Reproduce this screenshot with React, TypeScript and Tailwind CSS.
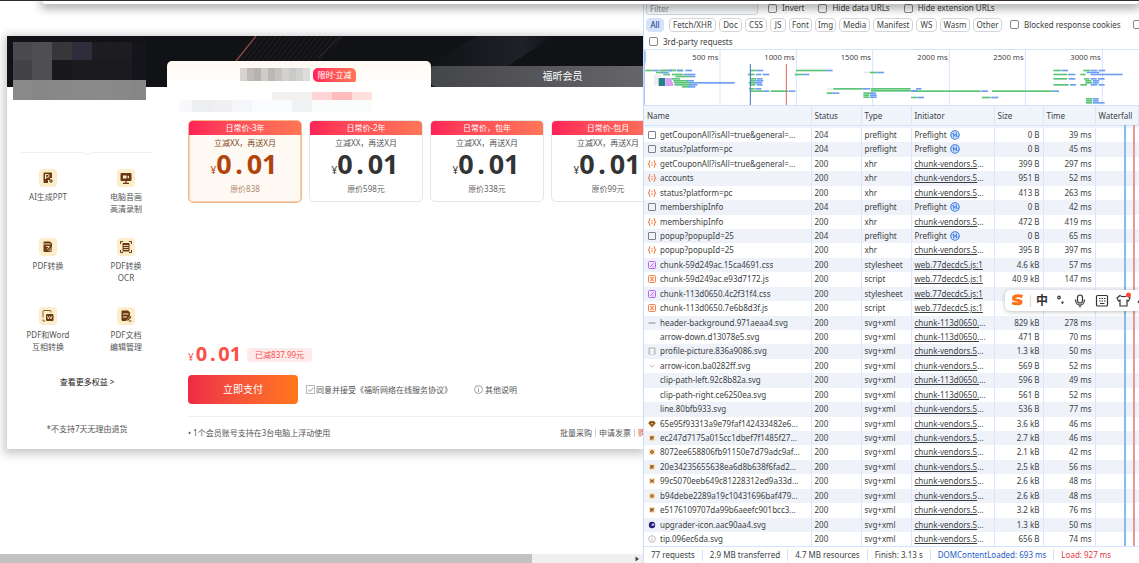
import type { ReactNode } from "react";
import clsx from "clsx";

type IconKind = "box" | "xhr" | "css" | "js" | "dash" | "none" | "picture" | "chevron" | "gem" | "tile" | "round" | "cross" | "globe" | "info";

interface RequestRow {
    icon: IconKind;
    name: string;
    status: number;
    type: string;
    initiator: "preflight" | "vendors" | "web" | "chunk";
    size: string;
    time: string;
}

const row = (
    icon: IconKind,
    name: string,
    status: number,
    type: string,
    initiator: RequestRow["initiator"],
    size: string,
    time: string
): RequestRow => ({ icon, name, status, type, initiator, size, time });

const requests: RequestRow[] = [
    row("box", "getCouponAll?isAll=true&general=...", 204, "preflight", "preflight", "0 B", "39 ms"),
    row("box", "status?platform=pc", 204, "preflight", "preflight", "0 B", "45 ms"),
    row("xhr", "getCouponAll?isAll=true&general=...", 200, "xhr", "vendors", "399 B", "297 ms"),
    row("xhr", "accounts", 200, "xhr", "vendors", "951 B", "52 ms"),
    row("xhr", "status?platform=pc", 200, "xhr", "vendors", "413 B", "263 ms"),
    row("box", "membershipInfo", 204, "preflight", "preflight", "0 B", "42 ms"),
    row("xhr", "membershipInfo", 200, "xhr", "vendors", "472 B", "419 ms"),
    row("box", "popup?popupId=25", 204, "preflight", "preflight", "0 B", "65 ms"),
    row("xhr", "popup?popupId=25", 200, "xhr", "vendors", "395 B", "397 ms"),
    row("css", "chunk-59d249ac.15ca4691.css", 200, "stylesheet", "web", "4.6 kB", "57 ms"),
    row("js", "chunk-59d249ac.e93d7172.js", 200, "script", "web", "40.9 kB", "147 ms"),
    row("css", "chunk-113d0650.4c2f31f4.css", 200, "stylesheet", "web", "10.4 kB", "112 ms"),
    row("js", "chunk-113d0650.7e6b8d3f.js", 200, "script", "web", "28.1 kB", "118 ms"),
    row("dash", "header-background.971aeaa4.svg", 200, "svg+xml", "chunk", "829 kB", "278 ms"),
    row("none", "arrow-down.d13078e5.svg", 200, "svg+xml", "chunk", "471 B", "70 ms"),
    row("picture", "profile-picture.836a9086.svg", 200, "svg+xml", "vendors", "1.3 kB", "50 ms"),
    row("chevron", "arrow-icon.ba0282ff.svg", 200, "svg+xml", "vendors", "569 B", "52 ms"),
    row("none", "clip-path-left.92c8b82a.svg", 200, "svg+xml", "chunk", "596 B", "49 ms"),
    row("none", "clip-path-right.ce6250ea.svg", 200, "svg+xml", "chunk", "561 B", "52 ms"),
    row("none", "line.80bfb933.svg", 200, "svg+xml", "vendors", "536 B", "77 ms"),
    row("gem", "65e95f93313a9e79faf142433482e6...", 200, "svg+xml", "vendors", "3.6 kB", "46 ms"),
    row("tile", "ec247d7175a015cc1dbef7f1485f27...", 200, "svg+xml", "vendors", "2.7 kB", "46 ms"),
    row("round", "8072ee658806fb91150e7d79adc9af...", 200, "svg+xml", "vendors", "2.1 kB", "42 ms"),
    row("tile", "20e34235655638ea6d8b638f6fad2...", 200, "svg+xml", "vendors", "2.5 kB", "56 ms"),
    row("cross", "99c5070eeb649c81228312ed9a33d...", 200, "svg+xml", "vendors", "2.6 kB", "48 ms"),
    row("round", "b94debe2289a19c10431696baf479...", 200, "svg+xml", "vendors", "2.6 kB", "48 ms"),
    row("tile", "e5176109707da99b6aeefc901bcc3...", 200, "svg+xml", "vendors", "3.2 kB", "76 ms"),
    row("globe", "upgrader-icon.aac90aa4.svg", 200, "svg+xml", "vendors", "1.3 kB", "50 ms"),
    row("info", "tip.096ec6da.svg", 200, "svg+xml", "vendors", "656 B", "74 ms"),
];

const iconArt: Record<IconKind, ReactNode> = {
    none: null,
    box: <rect x="1.5" y="1.5" width="7" height="7" rx="0.5" fill="none" stroke="#7d8084" />,
    xhr: (
        <g fill="none" stroke="#ee7d4a" strokeWidth="1.1">
            <path d="M3.4 1.5C2 1.5 2.4 3 2.2 4 2.1 4.700 1.500 5 .8 5c.7 0 1.300.3 1.400 1 .2 1-.2 2.500 1.200 2.500" />
            <path d="M6.600 1.500C8 1.500 7.600 3 7.800 4c.1.7.7 1 1.400 1-.7 0-1.300.3-1.400 1-.2 1 .2 2.500-1.200 2.500" />
            <path d="M5 3v1.200M5 5.200V7" />
        </g>
    ),
    css: (
        <g fill="none" stroke="#b069f2">
            <rect x="1.500" y="1.500" width="7" height="7" rx="1" fill="#f5e8ff" />
            <path d="M3.200 6.800 6.800 3.200M5.400 6.900h1.400" />
        </g>
    ),
    js: (
        <g fill="none" stroke="#ee8556">
            <rect x="1.500" y="1.500" width="7" height="7" rx="1" fill="#fff1ea" />
            <path d="M3 3.600h1.400v2.800H3M7 3.600H5.600v2.800H7M4 5h2" strokeWidth=".8" />
        </g>
    ),
    dash: <path d="M1.500 5h7" stroke="#888" />,
    picture: (
        <g>
            <rect x="2" y="2" width="6" height="6" fill="#e4e4e4" stroke="#a5a5a5" strokeWidth=".8" />
            <circle cx="5" cy="4.200" r="1.200" fill="#fff" />
            <path d="M3 8c0-2 4-2 4 0z" fill="#fff" />
        </g>
    ),
    chevron: <path d="m2.500 4 2.500 2L7.500 4" fill="none" stroke="#c5c5c5" />,
    gem: <path d="M2.800 2h4.400l1.500 2.200L5 8.500 1.300 4.200zM4 4.200 5 5.500 6 4.200" fill="#8a5212" stroke="#f0c47a" strokeWidth=".5" />,
    tile: (
        <g>
            <rect x="2" y="2" width="6" height="6" rx="1" fill="#fbe0b4" />
            <rect x="3.200" y="3.200" width="3.600" height="3.600" fill="#94602c" />
            <path d="m5 7 2-2" stroke="#fbe0b4" strokeWidth=".8" />
        </g>
    ),
    round: (
        <g>
            <rect x="2" y="2" width="6" height="6" rx="1" fill="#fbe0b4" />
            <circle cx="5" cy="5" r="1.500" fill="#c98e4c" stroke="#8a5a2a" strokeWidth=".8" />
        </g>
    ),
    cross: (
        <g>
            <rect x="2" y="2" width="6" height="6" rx="1" fill="#fbe0b4" />
            <path d="m3.200 3.500 3.600 3M6.800 3.500l-3.600 3" stroke="#94602c" strokeWidth="1.100" />
        </g>
    ),
    globe: (
        <g>
            <circle cx="5" cy="5" r="3.200" fill="#2b1f78" />
            <path d="M4.500 5.500c0-2 2-2.500 3-1.500-.5 2-1.500 2.500-3 1.500z" fill="#c9b8ff" />
        </g>
    ),
    info: (
        <g fill="none" stroke="#aaa" strokeWidth=".8">
            <circle cx="5" cy="5" r="3.300" />
            <path d="M5 4.500V7M5 3v.8" />
        </g>
    ),
};

function FileIcon({ kind }: { kind: IconKind }) {
    return (
        <svg viewBox="0 0 10 10" className="w-[10px] h-[10px] shrink-0">
            {iconArt[kind]}
        </svg>
    );
}

function PreflightIcon() {
    return (
        <svg viewBox="0 0 10 10" className="w-[10px] h-[10px]" fill="none" stroke="#2f74e0">
            <circle cx="5" cy="5" r="4.200" fill="#dbe8fd" strokeWidth="1.100" />
            <path d="M3.700 7.500V3M2.300 4.300 3.700 2.800M6.300 2.500V7M7.700 5.700 6.300 7.200M4 5.500l2-1" />
        </svg>
    );
}

// x, y, width in overview units (three per pixel)
const greenBars = [
    [4, 59, 22], [46, 59, 24], [76, 59, 20], [100, 59, 18], [36, 65, 22], [58, 71, 20], [84, 71, 34], [94, 77, 26], [118, 77, 20],
    [82, 84, 26], [88, 90, 44], [90, 96, 52], [92, 102, 48], [114, 108, 20],
    [318, 59, 20], [312, 71, 20], [318, 84, 18], [318, 90, 16], [314, 96, 18], [318, 102, 16], [316, 114, 16], [318, 121, 40], [380, 121, 52],
    [456, 59, 90], [452, 71, 24], [548, 127, 18], [568, 114, 88], [658, 127, 20], [658, 133, 18], [658, 139, 18], [678, 65, 22],
    [680, 114, 120], [680, 120, 120], [802, 121, 208], [801, 140, 18], [1014, 140, 26], [1044, 121, 182],
    [1228, 59, 24], [1228, 71, 42], [1228, 84, 42], [1228, 102, 46], [1318, 59, 20], [1309, 71, 16], [1320, 84, 16], [1324, 90, 18], [1324, 96, 20], [1309, 102, 20],
    [1326, 144, 18], [1326, 150, 18], [1326, 156, 18],
];

const blueBars = [
    [26, 59, 18], [70, 59, 14], [98, 59, 18], [124, 59, 20], [54, 65, 20], [120, 71, 34], [138, 77, 16], [130, 90, 20], [140, 96, 132],
    [136, 102, 24], [132, 108, 22], [338, 59, 20], [336, 71, 16], [356, 71, 20], [338, 84, 18], [334, 90, 24], [330, 96, 24], [338, 102, 18], [334, 114, 18],
    [358, 121, 18], [434, 121, 20], [546, 59, 20], [476, 71, 20], [566, 127, 20], [656, 114, 22], [678, 127, 18], [678, 133, 20], [678, 139, 20], [700, 65, 20],
    [816, 114, 16], [800, 120, 20], [1012, 121, 20], [820, 140, 20], [1042, 140, 21], [1226, 121, 19],
    [1253, 59, 19], [1272, 71, 22], [1274, 84, 20], [1278, 102, 18], [1340, 59, 20], [1364, 59, 20], [1328, 65, 38], [1340, 71, 96], [1340, 84, 18], [1362, 84, 20],
    [1346, 90, 20], [1346, 96, 18], [1340, 102, 20], [1364, 102, 18], [1346, 144, 18], [1346, 150, 18], [1346, 156, 36],
];

const ticks = [228, 457, 686, 916, 1144, 1375];

function Overview() {
    return (
        <svg viewBox="0 0 1485 165" className="block w-full h-[56px] border-t border-[#d5e3fb]" fontFamily="Noto Sans, sans-serif">
            {ticks.map((x, i) => (
                <g key={x}>
                    <path d={`M${x} 0V165`} stroke="#d3e3fd" strokeWidth="3" />
                    <text x={x - 5} y="29" textAnchor="end" fontSize="23" fill="#444">
                        {(i + 1) * 500} ms
                    </text>
                </g>
            ))}
            <path d="M1 0V165" stroke="#a8c7fa" strokeWidth="4" />
            <rect x="0" y="2" width="6" height="36" rx="3" fill="#a8c7fa" />
            <path d="M56 58h48M30 78h22M30 84h14M30 90h14M30 96h14M30 102h14M548 117h18M658 67h20" stroke="#dcdcdc" strokeWidth="3" />
            <rect x="44" y="84" width="19" height="24" fill="#27808c" />
            <path d="M64 84h16l8 18v6H64z" fill="#d9a0f5" />
            {greenBars.map(([x, y, w], i) => (
                <rect key={i} x={x} y={y} width={w} height="5" fill="#5cc476" />
            ))}
            {blueBars.map(([x, y, w], i) => (
                <rect key={i} x={x} y={y} width={w} height="5" fill="#6f9ff3" />
            ))}
            <path d="M319 42V165" stroke="#3f6fc4" strokeWidth="3" />
            <path d="M427 42V165" stroke="#e0605c" strokeWidth="3" />
        </svg>
    );
}

const filters = [
    ["All", "w-[18px]"],
    ["Fetch/XHR", "w-[47px]"],
    ["Doc", "w-[23px]"],
    ["CSS", "w-[22px]"],
    ["JS", "w-[16px]"],
    ["Font", "w-[23px]"],
    ["Img", "w-[21px]"],
    ["Media", "w-[31px]"],
    ["Manifest", "w-[40px]"],
    ["WS", "w-[21px]"],
    ["Wasm", "w-[30px]"],
    ["Other", "w-[29px]"],
];

const checkStyle = "appearance-none shrink-0 w-[9px] h-[9px] border border-[#858789] rounded-[2px] bg-white";

function CheckOption({ label }: { label: string }) {
    return (
        <label className="flex items-center gap-[5px] shrink-0">
            <input type="checkbox" className={checkStyle} />
            {label}
        </label>
    );
}

function Initiator({ kind }: { kind: RequestRow["initiator"] }) {
    if (kind === "preflight") {
        return (
            <span className="flex items-center gap-[3px]">
                Preflight <PreflightIcon />
            </span>
        );
    }
    if (kind === "web") {
        return <a href="#web" className="underline">web.77decdc5.js:1</a>;
    }
    return (
        <>
            <a href="#chunk" className="underline">{kind === "vendors" ? "chunk-vendors.5" : "chunk-113d0650."}</a>...
        </>
    );
}

function DevTools() {
    const cell = "p-0 pl-[3px] border-r border-[#d9e6fb] font-normal overflow-hidden";
    const stat = "border-l border-[#d3e3fd] px-[7px]";
    return (
        <aside className="w-[496px] shrink-0 border-l border-[#c9dcfa] bg-white font-['Noto_Sans',sans-serif] text-[8px] leading-[12px] text-[#3c3f43] whitespace-nowrap overflow-hidden">
            <div className="flex items-center h-[16px] pl-[2px]">
                <input
                    type="text"
                    placeholder="Filter"
                    aria-label="Filter"
                    className="w-[112px] h-[14px] px-[3px] mr-[10px] rounded-[3px] border border-[#d5d7da] bg-[#f8f9fb] placeholder:text-[#8b8e92]"
                />
                <div className="flex gap-[14px]">
                    <CheckOption label="Invert" />
                    <CheckOption label="Hide data URLs" />
                    <CheckOption label="Hide extension URLs" />
                </div>
            </div>
            <div className="flex items-center h-[17px] pl-[2px] gap-[3px]">
                {filters.map(([label, width], i) => (
                    <button
                        key={label}
                        className={clsx(
                            "h-[14px] shrink-0 rounded-[4px] border text-center leading-[12px]",
                            width,
                            i === 0 ? "bg-[#d3e3fd] border-[#d3e3fd] mr-[2px] text-[#0a3272]" : "border-[#d3d5d8]"
                        )}
                    >
                        {label}
                    </button>
                ))}
                <div className="flex items-center gap-[12px] pl-[5px]">
                    <CheckOption label="Blocked response cookies" />
                    <input type="checkbox" aria-label="Blocked requests" className={checkStyle} />
                </div>
            </div>
            <div className="flex items-center h-[16px] pl-[5px] pt-px">
                <CheckOption label="3rd-party requests" />
            </div>
            <Overview />
            <div className="relative">
                <table className="w-full table-fixed border-collapse">
                    <colgroup>
                        <col className="w-[167px]" />
                        <col className="w-[50px]" />
                        <col className="w-[50px]" />
                        <col className="w-[83px]" />
                        <col className="w-[49px]" />
                        <col className="w-[52px]" />
                        <col />
                    </colgroup>
                    <thead>
                        <tr className="h-[20px] bg-[#f0f4fb] text-left border-y border-[#d3e3fd]">
                            {["Name", "Status", "Type", "Initiator", "Size", "Time", "Waterfall"].map((title) => (
                                <th key={title} className={cell}>{title}</th>
                            ))}
                        </tr>
                    </thead>
                    <tbody>
                        <tr className="h-[2px] bg-[#f0f4fb]">
                            <td colSpan={7} className="p-0" />
                        </tr>
                        {requests.map((r, i) => (
                            <tr key={i} className={clsx((i % 7) % 2 ? "h-[15px]" : "h-[14px]", i % 2 ? "bg-[#eff3f9]" : "bg-white")}>
                                <td className={cell}>
                                    <span className="flex items-center gap-[3px]">
                                        <FileIcon kind={r.icon} />
                                        {r.name}
                                    </span>
                                </td>
                                <td className={cell}>{r.status}</td>
                                <td className={cell}>{r.type}</td>
                                <td className={cell}><Initiator kind={r.initiator} /></td>
                                <td className={clsx(cell, "text-right pr-[3px]")}>{r.size}</td>
                                <td className={clsx(cell, "text-right pr-[3px]")}>{r.time}</td>
                                <td className="p-0" />
                            </tr>
                        ))}
                    </tbody>
                </table>
                <div className="absolute top-[20px] bottom-0 right-[13px] w-[2px] bg-[#86bbee]" />
                <div className="absolute top-[20px] bottom-0 right-[4px] w-[2px] bg-[#e39a98]" />
            </div>
            <footer className="flex items-center h-[18px] border-t border-[#d3e3fd] pl-[7px]">
                <span className="pr-[7px]">77 requests</span>
                <span className={stat}>2.9 MB transferred</span>
                <span className={stat}>4.7 MB resources</span>
                <span className={stat}>Finish: 3.13 s</span>
                <span className={clsx(stat, "text-[#1a5cc8]")}>DOMContentLoaded: 693 ms</span>
                <span className={clsx(stat, "text-[#e0393e]")}>Load: 927 ms</span>
            </footer>
        </aside>
    );
}

const benefits: { lines: string[]; art: ReactNode }[] = [
    {
        lines: ["AI生成PPT"],
        art: (
            <>
                <path d="M5.500 3.500h6.500a1 1 0 0 1 1 1V9h-2v2H9v3H5.500a1 1 0 0 1-1-1V4.500a1 1 0 0 1 1-1z" fill="#6b3a14" />
                <path d="M6.500 10V5.500h2.300a1.300 1.300 0 0 1 0 2.700H6.500" fill="none" stroke="#fdeecb" />
                <path d="M12 10v4M10 12h4" stroke="#6b3a14" strokeWidth="1.200" />
            </>
        ),
    },
    {
        lines: ["电脑音画", "高清录制"],
        art: (
            <>
                <rect x="3.500" y="4" width="11" height="8" rx="1" fill="#6b3a14" />
                <path d="M9 12v2M6 14.300h6" stroke="#6b3a14" strokeWidth="1.300" />
                <path d="M6 6.500h3.500v3H6zM10 8l2-1.500v3z" fill="#fdeecb" />
            </>
        ),
    },
    {
        lines: ["PDF转换"],
        art: (
            <>
                <path d="M4.500 4.500a1 1 0 0 1 1-1H11l2 2V13a1 1 0 0 1-1 1H5.500a1 1 0 0 1-1-1z" fill="#6b3a14" />
                <path d="M4.500 6h7M7 8.500h3.500L8 11.500M9.500 13l4-4M11 13.500l2.500-2" stroke="#fdeecb" fill="none" strokeWidth=".9" />
            </>
        ),
    },
    {
        lines: ["PDF转换", "OCR"],
        art: (
            <>
                <path d="M3.500 6V3.500H6M12 3.500h2.500V6M14.500 12v2.500H12M6 14.500H3.500V12" fill="none" stroke="#6b3a14" />
                <rect x="5.500" y="5" width="7" height="8.500" fill="#6b3a14" />
                <path d="M6.500 7.500h5M6.500 9.500h5M6.500 11.500h5" stroke="#fdeecb" strokeWidth=".8" />
            </>
        ),
    },
    {
        lines: ["PDF和Word", "互相转换"],
        art: (
            <>
                <path d="M12 5.500v-1a1 1 0 0 0-1-1H5a1 1 0 0 0-1 1v6M4 12.500v1.500h2" fill="none" stroke="#8a5a30" />
                <rect x="7" y="7" width="7.500" height="7" rx="1" fill="#6b3a14" />
                <path d="M8.500 9l.8 3 1.400-2.500 1.300 2.500.9-3" fill="none" stroke="#fdeecb" strokeWidth=".8" />
            </>
        ),
    },
    {
        lines: ["PDF文档", "编辑管理"],
        art: (
            <>
                <path d="M4.500 4.500a1 1 0 0 1 1-1H11l2 2V9l-4 5H5.500a1 1 0 0 1-1-1z" fill="#6b3a14" />
                <path d="M6 7h5.500M6 10h4" stroke="#fdeecb" />
                <path d="m10.500 13.500 3.500-4M12 14h2.500" stroke="#6b3a14" strokeWidth="1.200" />
            </>
        ),
    },
];

const plans = [
    { title: "日常价-3年", origin: "原价838" },
    { title: "日常价-2年", origin: "原价598元" },
    { title: "日常价，包年", origin: "原价338元" },
    { title: "日常价-包月", origin: "原价99元" },
];

const avatarPixels = [
    "bg-[#4a494d]", "bg-[#4f4e52]", "bg-[#363739]", "bg-[#2f2d3c]", "bg-[#1d1c21]", "bg-[#1d1c21]", "bg-[#15141a]",
    "bg-[#434247]", "bg-[#4f4e53]", "bg-[#17181b]", "bg-[#1b1a1f]", "bg-[#1b1a1f]", "bg-[#1b1a1f]", "bg-[#15141a]",
    "bg-[#89898a]", "bg-[#878788]", "bg-[#888889]", "bg-[#89898a]", "bg-[#8a8a8b]", "bg-[#888889]", "bg-[#868687]",
];

const tabPixels = [
    "bg-[#d9d3cf]", "bg-[#bfbbb8]", "bg-[#b5b2b0]", "bg-[#cfcbc7]", "bg-[#bab7b4]", "bg-[#c5c2bf]",
    "bg-[#d4d1cf]", "bg-[#c9c9c8]", "bg-[#d2d1d0]", "bg-[#dddcda]",
];

function HeaderArt() {
    return (
        <svg viewBox="0 0 637 51" preserveAspectRatio="xMinYMin slice" className="absolute inset-0 w-full h-full">
            <defs>
                <linearGradient id="sheen" x1="0" x2="1">
                    <stop offset="0" stopColor="#111216" />
                    <stop offset=".75" stopColor="#202127" />
                    <stop offset="1" stopColor="#101114" />
                </linearGradient>
                <pattern id="hatch" width="4" height="4" patternUnits="userSpaceOnUse" patternTransform="rotate(38)">
                    <path d="M0 0V4" stroke="#2c2326" strokeWidth="1.200" />
                </pattern>
            </defs>
            <rect width="637" height="51" fill="#111216" />
            <path d="M249 0h90l-28 26h-84z" fill="url(#hatch)" />
            <path d="M249 0l-20 25" stroke="#8b4a48" strokeWidth="1.300" />
            <path d="M334 0l-23 22" stroke="#333135" />
            <path d="M35 0h100l-4 5H35z" fill="url(#hatch)" opacity=".6" />
            <path d="M470 0h78l-48 30h-80z" fill="url(#sheen)" />
        </svg>
    );
}

function Price({ big }: { big?: boolean }) {
    return (
        <>
            0<span className={clsx("inline-block text-center", big ? "w-[15px]" : "w-[11px]")}>.</span>01
        </>
    );
}

function PlanCard({ title, origin, active }: { title: string; origin: string; active: boolean }) {
    return (
        <button
            className={clsx(
                "flex flex-col w-[114px] shrink-0 rounded-[5px] overflow-hidden border text-center",
                active ? "h-[83px] bg-[#fff9f3] border-[#f6b98c] text-[#7a4a22] ring-1 ring-inset ring-[#f9cfae]" : "h-[82px] bg-white border-[#e6e6e6] text-[#555]"
            )}
        >
            <span className="block h-[15px] -mx-px -mt-px self-stretch bg-linear-to-r from-[#ff1f58] to-[#ff7657] text-white leading-[15px]">{title}</span>
            <span className="block mt-[2px] self-stretch leading-[12px]">立减XX，再送X月</span>
            <span className={clsx("flex items-baseline justify-center self-stretch h-[30px] leading-[30px] pr-[2px]", active ? "text-[#b0450c]" : "text-[#333]")}>
                <span className="text-[10px]">¥</span>
                <strong className="text-[27px] font-bold"><Price big /></strong>
            </span>
            <span className={clsx("block mt-[4px] self-stretch leading-[12px]", active ? "text-[#b08a72]" : "text-[#666]")}>{origin}</span>
        </button>
    );
}

function Sidebar() {
    return (
        <div className="w-[160px] shrink-0 pt-[65px] pb-[14px] text-center text-[#555]">
            <svg viewBox="0 0 132 4" className="block w-[132px] h-[4px] ml-[14px]">
                <path d="M0 .5h62l4 2.500 4-2.500h62" fill="none" stroke="#f0f0f0" />
            </svg>
            <ul className="grid grid-cols-[78px_78px] pt-[13px] pl-[2px]">
                {benefits.map(({ lines, art }, i) => (
                    <li key={i} className="h-[69px] leading-[12px]">
                        <svg viewBox="0 0 18 18" className="block w-[18px] h-[18px] mx-auto mb-[4px] rounded-[4px] bg-[#fdeecb]">
                            {art}
                        </svg>
                        {lines.map((line) => (
                            <p key={line}>{line}</p>
                        ))}
                    </li>
                ))}
            </ul>
            <a href="#benefits" className="block leading-[12px] text-[#222]">查看更多权益 &gt;</a>
            <p className="mt-[35px] leading-[12px]">*不支持7天无理由退货</p>
        </div>
    );
}

function Checkout() {
    return (
        <div className="flex-1 min-w-0 pl-[21px] text-[#555]">
            <div className="pt-[5px] -ml-[9px]">
                <div className="flex h-[8px] pl-[93px]">
                    <div className="w-[40px] bg-[#f3f1f0]" />
                    <div className="w-[20px] bg-[#ffd4d8]" />
                    <div className="w-[20px] bg-[#ffbcbd]" />
                    <div className="w-[20px] bg-[#ffe0dc]" />
                </div>
                <div className="flex h-[12px]">
                    <div className="w-[13px] bg-[#f8f9fa]" />
                    <div className="w-[20px] bg-[#eceef0]" />
                    <div className="w-[20px] bg-[#f0f0f3]" />
                    <div className="w-[20px] bg-[#f5f6f9]" />
                    <div className="w-[40px] bg-[#fafcff]" />
                    <div className="w-[20px] bg-[#f1f2f4]" />
                    <div className="w-[60px] bg-[#fafbfb]" />
                </div>
            </div>
            <div className="flex items-start gap-[7px] h-[83px] mt-[8px] overflow-hidden">
                {plans.map((plan, i) => (
                    <PlanCard key={plan.title} {...plan} active={i === 0} />
                ))}
            </div>
            <div className="flex items-center h-[16px] mt-[144px] text-[#fb4f4a]">
                <span className="flex items-baseline leading-[16px]">
                    <span className="text-[10px] pr-[2px]">¥</span>
                    <strong className="text-[20px] font-bold"><Price /></strong>
                </span>
                <span className="ml-[6px] px-[8px] h-[14px] leading-[14px] rounded-[3px] bg-[#feeaea]">已减837.99元</span>
            </div>
            <div className="flex items-center mt-[12px]">
                <button className="w-[110px] h-[29px] rounded-[4px] bg-linear-to-r from-[#ee2a45] to-[#ff7618] text-white text-[10px]">立即支付</button>
                <label className="flex items-center ml-[8px] whitespace-nowrap [text-spacing-trim:space-all]">
                    <span className="grid mr-px">
                        <input type="checkbox" defaultChecked className="[grid-area:1/1] appearance-none w-[9px] h-[9px] border border-[#bbb] bg-white" />
                        <svg viewBox="0 0 9 9" className="[grid-area:1/1] w-[9px] h-[9px] pointer-events-none">
                            <path d="m2 4.500 2 2 3.500-4" fill="none" stroke="#999" />
                        </svg>
                    </span>
                    同意并接受
                    <a href="#agreement">《福昕网络在线服务协议》</a>
                </label>
                <a href="#notes" className="flex items-center gap-[2px] ml-[22px] whitespace-nowrap">
                    <svg viewBox="0 0 9 9" className="w-[9px] h-[9px]" fill="none" stroke="#888" strokeWidth=".8">
                        <circle cx="4.500" cy="4.500" r="4" />
                        <path d="M4.500 4v3M4.500 2.200v.9" />
                    </svg>
                    其他说明
                </a>
            </div>
            <div className="flex items-center justify-between mt-[12px] h-[33px] border-t border-[#f0f0f0] whitespace-nowrap">
                <p>• 1个会员账号支持在3台电脑上浮动使用</p>
                <p className="flex items-center gap-[3px] w-[83px] overflow-hidden">
                    <a href="#bulk">批量采购</a>
                    <span className="w-px h-[8px] bg-[#ccc] shrink-0" />
                    <a href="#invoice">申请发票</a>
                    <span className="w-px h-[8px] bg-[#ccc] shrink-0" />
                    <a href="#close" className="text-[#d8403a]">购买咨询</a>
                </p>
            </div>
        </div>
    );
}

function PurchaseDialog() {
    return (
        <section className="ml-[7px] mt-[36px] bg-white rounded-tl-[2px] shadow-[0_2px_10px_3px_rgba(0,0,0,0.22)]">
            <header className="relative flex items-end h-[51px] text-[10px]">
                <HeaderArt />
                <div className="absolute left-[6px] top-[6px] grid grid-cols-[19px_20px_20px_20px_20px_20px_14px] grid-rows-[18px_20px_20px] z-10">
                    {avatarPixels.map((color, i) => (
                        <div key={i} className={color} />
                    ))}
                </div>
                <button className="relative flex items-start w-[264px] h-[26px] ml-[160px] pl-[73px] pt-[7px] rounded-t-[5px] bg-linear-to-b from-[#fff8f2] to-white">
                    <span className="flex h-[13px]">
                        {tabPixels.map((color, i) => (
                            <span key={i} className={clsx("w-[7px]", color)} />
                        ))}
                    </span>
                    <span className="ml-[3px] w-[43px] h-[14px] leading-[14px] rounded-tl-[5px] rounded-br-[2px] rounded-tr-[5px] rounded-bl-[5px] bg-linear-to-r from-[#ff1f58] to-[#ff7657] text-white text-[8px]">限时·立减</span>
                </button>
                <button className="relative flex-1 h-[21px] pl-[51px] rounded-tl-[3px] rounded-bl-[5px] bg-linear-to-r from-[#45464a] to-[#66666a] text-white">福昕会员</button>
            </header>
            <div className="flex">
                <Sidebar />
                <Checkout />
            </div>
        </section>
    );
}

function InputMethodBar() {
    return (
        <div className="absolute right-0 top-[290px] flex items-center w-[134px] h-[21px] pl-[5px] rounded-l-[5px] bg-white shadow-[0_1px_4px_rgba(0,0,0,0.25)] overflow-hidden">
            <svg viewBox="0 0 134 21" className="absolute inset-0 w-[134px] h-[21px]" fill="none" stroke="#333" strokeWidth="1.200">
                <path d="M17.500 6.500C13 5 8.500 6 8.500 8.300c0 2.700 7.500 1.400 7.500 3.700 0 2-4.500 2.500-9 .8" stroke="#ff6f1a" strokeWidth="3" />
                <path d="M25.500 5v12" stroke="#ddd" />
                <circle cx="54" cy="7.500" r="1.300" />
                <path d="M57.500 11.500v1l-.5 1" strokeWidth="2" />
                <rect x="72.500" y="5" width="5" height="8" rx="2.500" />
                <path d="M70.500 9.500c0 7.500 9 7.500 9 0M75 15v2.500" />
                <rect x="91.500" y="5.500" width="11" height="10.500" rx="1" />
                <path d="M94 8.500h1.500m1 0H98m1 0h1.500M94 11h1.500m1 0H98m1 0h1.500M95 13.500h4.500" />
                <path d="M115 5.500 112 8l1.500 3 1.500-.8V16h7v-5.800l1.500.8 1.500-3-3-2.500c-1 1.500-6 1.500-7 0z" />
                <circle cx="123.500" cy="5" r="2.500" fill="#ff4b33" stroke="none" />
                <path d="m133 13 2-4" />
            </svg>
            <span className="ml-[26px] text-[12px] leading-[21px] font-bold text-[#333]">中</span>
        </div>
    );
}

export default function App() {
    return (
        <div className="relative flex min-h-screen bg-white overflow-hidden font-['Noto_Sans','Noto_Sans_CJK_SC',sans-serif] text-[8px]">
            <main className="flex flex-col flex-1 min-w-0 overflow-hidden">
                <PurchaseDialog />
                <div className="flex items-center mt-auto h-[10px] bg-[#f0f0f0]">
                    <div className="w-[532px] h-full bg-[#c1c1c1]" />
                    <svg viewBox="0 0 10 10" className="w-[10px] h-[10px] ml-auto mr-px">
                        <path d="M3.500 2.500 7 5 3.500 7.500z" fill="#444" />
                    </svg>
                </div>
            </main>
            <DevTools />
            <div className="absolute inset-x-0 top-0 h-px bg-[#322c30] z-10" />
            <div className="absolute left-[42px] right-0 top-0 h-[4px] rounded-b-[6px] bg-white shadow-[0_2px_10px_2px_rgba(0,0,0,0.4)]" />
            <InputMethodBar />
        </div>
    );
}
